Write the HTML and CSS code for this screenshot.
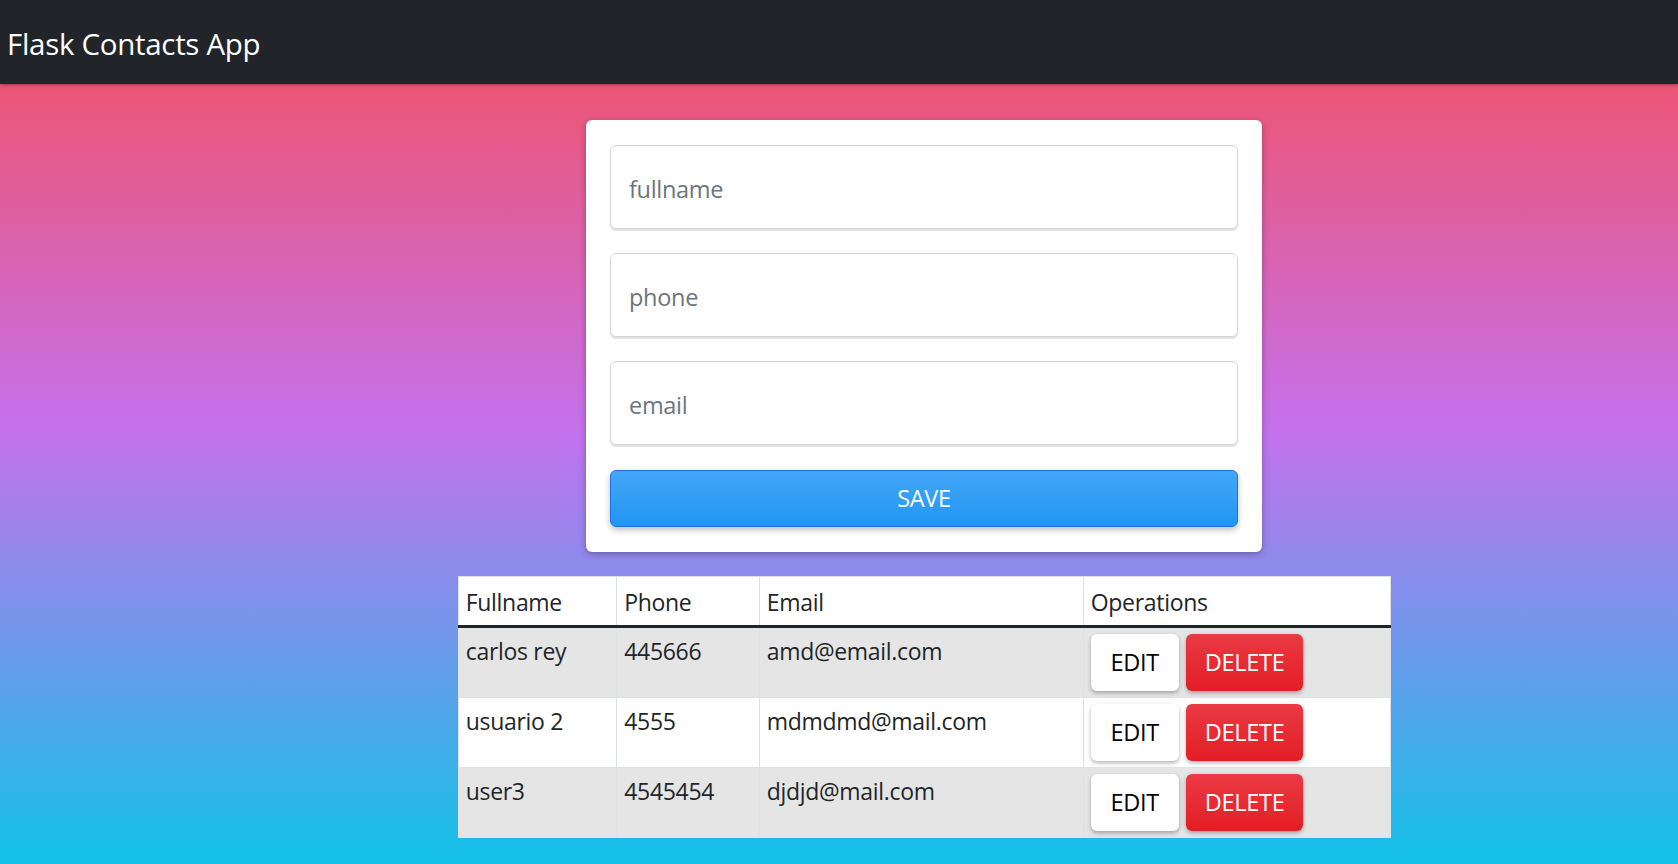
FILE: index.html
```html
<!DOCTYPE html>
<html lang="en">
<head>
<meta charset="utf-8">
<title>Flask Contacts App</title>
<link rel="stylesheet" href="styles.css">
</head>
<body>
<nav class="navbar">
  <a class="brand" href="#">Flask Contacts App</a>
</nav>
<main class="content">
  <form class="card">
    <input class="field" type="text" placeholder="fullname">
    <input class="field" type="text" placeholder="phone">
    <input class="field" type="text" placeholder="email">
    <button class="save" type="button">SAVE</button>
  </form>
  <table class="contacts">
    <colgroup>
      <col class="c1"><col class="c2"><col class="c3"><col class="c4">
    </colgroup>
    <thead>
      <tr><th>Fullname</th><th>Phone</th><th>Email</th><th>Operations</th></tr>
    </thead>
    <tbody>
      <tr>
        <td>carlos rey</td><td>445666</td><td>amd@email.com</td>
        <td><div class="ops"><a class="btn edit" href="#">EDIT</a><a class="btn delete" href="#">DELETE</a></div></td>
      </tr>
      <tr>
        <td>usuario 2</td><td>4555</td><td>mdmdmd@mail.com</td>
        <td><div class="ops"><a class="btn edit" href="#">EDIT</a><a class="btn delete" href="#">DELETE</a></div></td>
      </tr>
      <tr>
        <td>user3</td><td>4545454</td><td>djdjd@mail.com</td>
        <td><div class="ops"><a class="btn edit" href="#">EDIT</a><a class="btn delete" href="#">DELETE</a></div></td>
      </tr>
    </tbody>
  </table>
</main>
</body>
</html>
```
FILE: styles.css
```css
* { box-sizing: border-box; }

html, body {
  margin: 0;
  min-height: 100vh;
}

body {
  font-family: "Open Sans", "Noto Sans", sans-serif;
  font-size: 24px;
  line-height: 1.5;
  color: #212529;
  background: linear-gradient(to bottom, #f64f59 0px, #c471ed 432px, #12c2e9 864px);
  background-attachment: fixed;
}

.navbar {
  height: 84px;
  background: #212529;
  display: flex;
  align-items: center;
  padding: 0 7px;
  box-shadow: 0 1px 3px rgba(0,0,0,.35);
}

.brand {
  color: #fff;
  text-decoration: none;
  font-size: 29.5px;
  letter-spacing: -0.3px;
  line-height: 1;
  padding-top: 3px;
}

.content {
  display: flex;
  flex-direction: column;
  align-items: center;
  gap: 24px;
  padding: 36px 0 0 170px;
}

.card {
  width: 676px;
  background: #fff;
  border-radius: 6px;
  box-shadow: 0 2px 6px rgba(0,0,0,.3);
  padding: 25px 24px 25px;
  display: flex;
  flex-direction: column;
  gap: 24.5px;
}

.field {
  height: 83.5px;
  border: 1.5px solid #d3d7dc;
  border-radius: 6px;
  box-shadow: 0 2px 1px rgba(0,0,0,.12);
  padding: 5px 18px 0;
  font-family: inherit;
  font-size: 23.5px;
  letter-spacing: -0.3px;
  color: #495057;
  background: #fff;
  outline: none;
}

.field::placeholder { color: #6c757d; }

.save {
  margin-top: 1px;
  height: 56.5px;
  border: 1.5px solid #1f6fe8;
  border-radius: 6px;
  background: linear-gradient(to bottom, #44a6f6, #2196f3);
  color: #fff;
  font-family: inherit;
  font-size: 23.5px;
  letter-spacing: -0.3px;
  box-shadow: 0 3px 6px rgba(0,0,0,.25);
}

.contacts {
  width: 932px;
  border-collapse: collapse;
  table-layout: fixed;
  background: #fff;
  border: 1.5px solid #dee2e6;
  letter-spacing: -0.3px;
  font-size: 23px;
}

.c1 { width: 158.5px; }
.c2 { width: 142.5px; }
.c3 { width: 324px; }
.c4 { width: 307px; }

.contacts th,
.contacts td {
  border: 1.5px solid #dee2e6;
  padding: 6px 7.2px;
  text-align: left;
  vertical-align: top;
  font-weight: 400;
  white-space: nowrap;
}

.contacts th {
  padding-top: 8px;
  padding-bottom: 6px;
}

.contacts thead th {
  border-bottom: 3px solid #212529;
}

.contacts tbody tr:nth-child(odd) { background: #e5e5e5; }
.contacts tbody tr:nth-child(even) { background: #fff; }

.ops {
  display: flex;
  gap: 7.5px;
}

.btn {
  display: inline-flex;
  align-items: center;
  justify-content: center;
  height: 57px;
  padding: 0 18px;
  border-radius: 6px;
  text-decoration: none;
  box-shadow: 0 2px 4px rgba(0,0,0,.3);
  font-size: 23.5px;
}

.edit {
  width: 88px;
  background: #fff;
  color: #000;
}

.delete {
  width: 117px;
  background: linear-gradient(to bottom, #ea3a44, #e31d25);
  color: #fff;
}
```
